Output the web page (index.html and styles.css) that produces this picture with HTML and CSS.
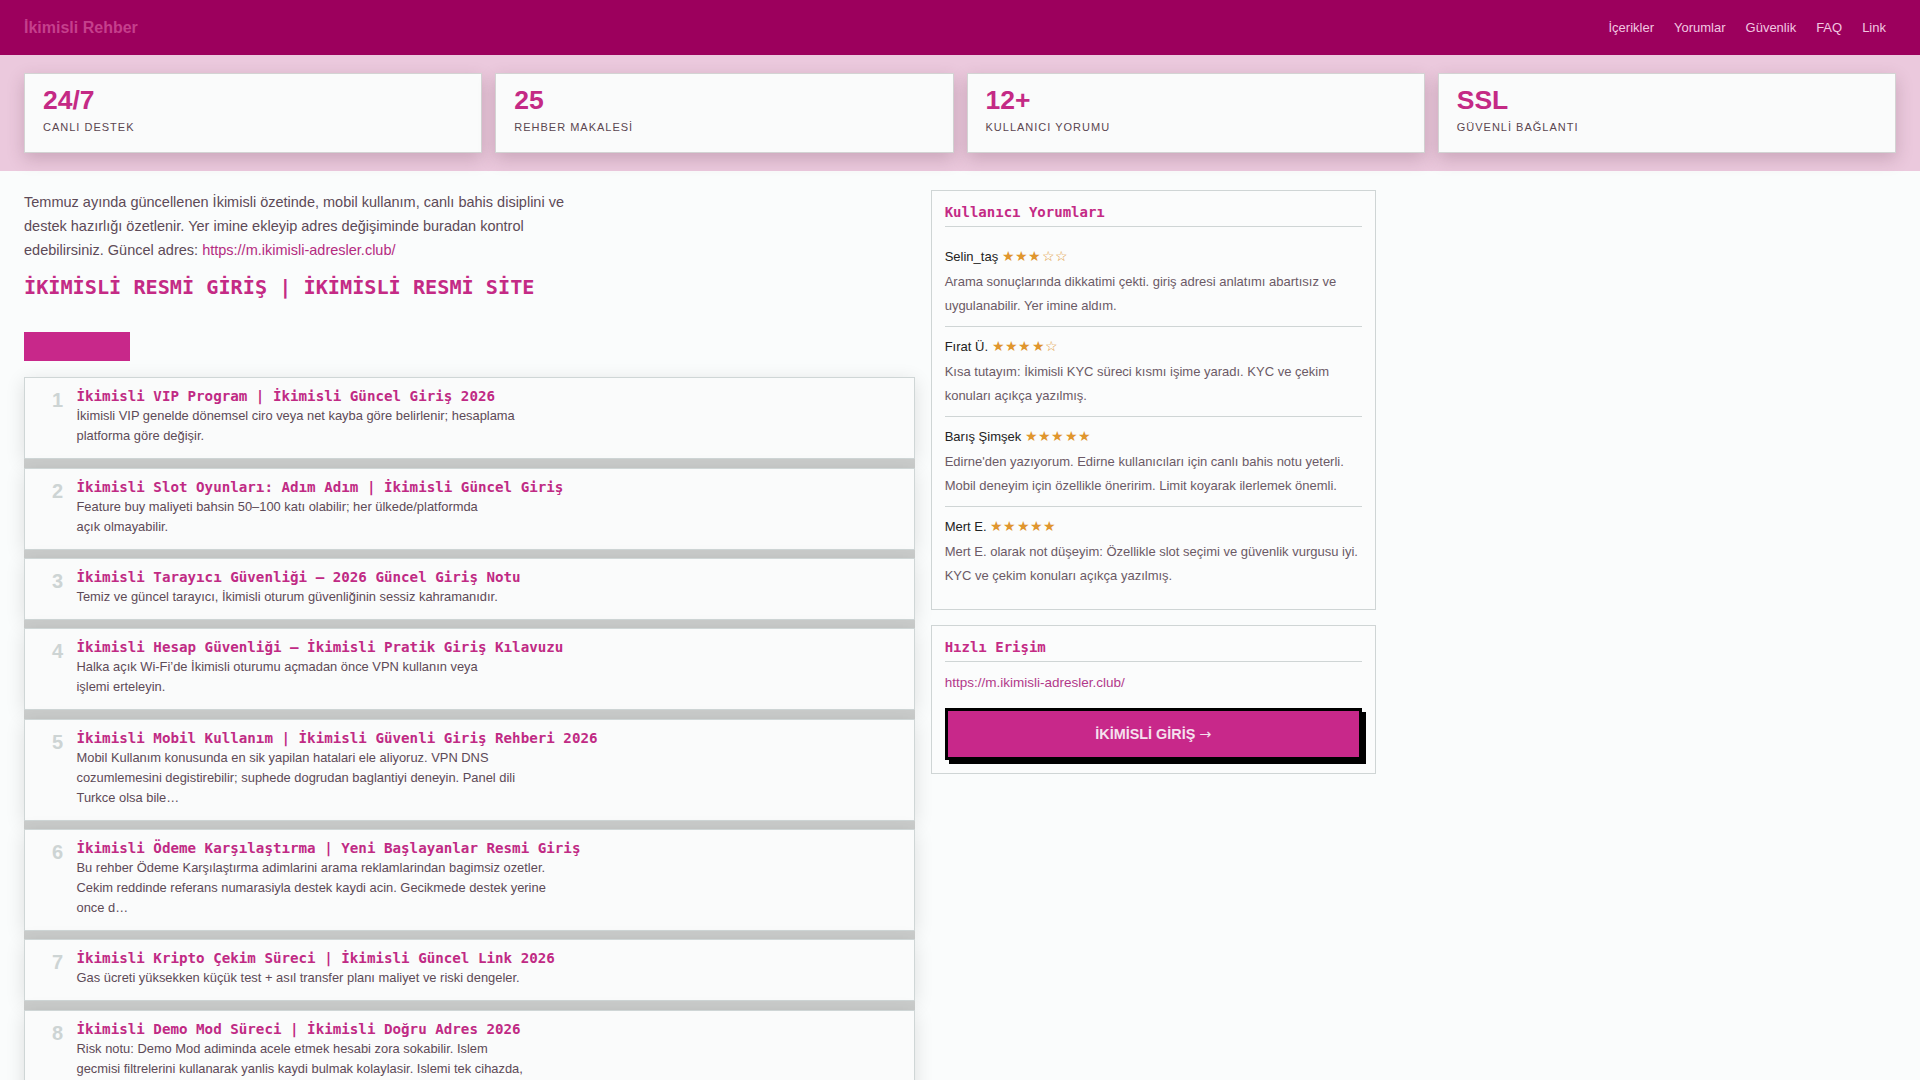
FILE: index.html
```html
<!DOCTYPE html>
<html lang="tr">
<head>
<meta charset="utf-8">
<title>İkimisli Rehber</title>
<link rel="stylesheet" href="styles.css">
</head>
<body>
<header class="topbar">
  <div class="brand">İkimisli Rehber</div>
  <nav class="nav">
    <a href="#">İçerikler</a>
    <a href="#">Yorumlar</a>
    <a href="#">Güvenlik</a>
    <a href="#">FAQ</a>
    <a href="#">Link</a>
  </nav>
</header>

<section class="stats">
  <div class="stat"><div class="stat-num">24/7</div><div class="stat-label">CANLI DESTEK</div></div>
  <div class="stat"><div class="stat-num">25</div><div class="stat-label">REHBER MAKALESİ</div></div>
  <div class="stat"><div class="stat-num">12+</div><div class="stat-label">KULLANICI YORUMU</div></div>
  <div class="stat"><div class="stat-num">SSL</div><div class="stat-label">GÜVENLİ BAĞLANTI</div></div>
</section>

<main class="main">
  <div class="content">
    <p class="intro">Temmuz ayında güncellenen İkimisli özetinde, mobil kullanım, canlı bahis disiplini ve destek hazırlığı özetlenir. Yer imine ekleyip adres değişiminde buradan kontrol edebilirsiniz. Güncel adres: <a href="#">https://m.ikimisli-adresler.club/</a></p>
    <h1 class="page-title">İKİMİSLİ RESMİ GİRİŞ | İKİMİSLİ RESMİ SİTE</h1>
    <div class="cta-bar"></div>

    <ol class="articles">
      <li class="article">
        <span class="num">1</span>
        <div class="article-body">
          <h3>İkimisli VIP Program | İkimisli Güncel Giriş 2026</h3>
          <p>İkimisli VIP genelde dönemsel ciro veya net kayba göre belirlenir; hesaplama<br>platforma göre değişir.</p>
        </div>
      </li>
      <li class="article">
        <span class="num">2</span>
        <div class="article-body">
          <h3>İkimisli Slot Oyunları: Adım Adım | İkimisli Güncel Giriş</h3>
          <p>Feature buy maliyeti bahsin 50–100 katı olabilir; her ülkede/platformda<br>açık olmayabilir.</p>
        </div>
      </li>
      <li class="article">
        <span class="num">3</span>
        <div class="article-body">
          <h3>İkimisli Tarayıcı Güvenliği — 2026 Güncel Giriş Notu</h3>
          <p>Temiz ve güncel tarayıcı, İkimisli oturum güvenliğinin sessiz kahramanıdır.</p>
        </div>
      </li>
      <li class="article">
        <span class="num">4</span>
        <div class="article-body">
          <h3>İkimisli Hesap Güvenliği — İkimisli Pratik Giriş Kılavuzu</h3>
          <p>Halka açık Wi-Fi’de İkimisli oturumu açmadan önce VPN kullanın veya<br>işlemi erteleyin.</p>
        </div>
      </li>
      <li class="article">
        <span class="num">5</span>
        <div class="article-body">
          <h3>İkimisli Mobil Kullanım | İkimisli Güvenli Giriş Rehberi 2026</h3>
          <p>Mobil Kullanım konusunda en sik yapilan hatalari ele aliyoruz. VPN DNS<br>cozumlemesini degistirebilir; suphede dogrudan baglantiyi deneyin. Panel dili<br>Turkce olsa bile…</p>
        </div>
      </li>
      <li class="article">
        <span class="num">6</span>
        <div class="article-body">
          <h3>İkimisli Ödeme Karşılaştırma | Yeni Başlayanlar Resmi Giriş</h3>
          <p>Bu rehber Ödeme Karşılaştırma adimlarini arama reklamlarindan bagimsiz ozetler.<br>Cekim reddinde referans numarasiyla destek kaydi acin. Gecikmede destek yerine<br>once d…</p>
        </div>
      </li>
      <li class="article">
        <span class="num">7</span>
        <div class="article-body">
          <h3>İkimisli Kripto Çekim Süreci | İkimisli Güncel Link 2026</h3>
          <p>Gas ücreti yüksekken küçük test + asıl transfer planı maliyet ve riski dengeler.</p>
        </div>
      </li>
      <li class="article">
        <span class="num">8</span>
        <div class="article-body">
          <h3>İkimisli Demo Mod Süreci | İkimisli Doğru Adres 2026</h3>
          <p>Risk notu: Demo Mod adiminda acele etmek hesabi zora sokabilir. Islem<br>gecmisi filtrelerini kullanarak yanlis kaydi bulmak kolaylasir. Islemi tek cihazda,<br>tek oturumda tamamla…</p>
        </div>
      </li>
    </ol>
  </div>

  <aside class="sidebar">
    <section class="box">
      <h2 class="box-title">Kullanıcı Yorumları</h2>
      <div class="review">
        <div class="review-name">Selin_taş <span class="stars">★★★☆☆</span></div>
        <p>Arama sonuçlarında dikkatimi çekti. giriş adresi anlatımı abartısız ve uygulanabilir. Yer imine aldım.</p>
      </div>
      <div class="review">
        <div class="review-name">Fırat Ü. <span class="stars">★★★★☆</span></div>
        <p>Kısa tutayım: İkimisli KYC süreci kısmı işime yaradı. KYC ve çekim konuları açıkça yazılmış.</p>
      </div>
      <div class="review">
        <div class="review-name">Barış Şimşek <span class="stars">★★★★★</span></div>
        <p>Edirne'den yazıyorum. Edirne kullanıcıları için canlı bahis notu yeterli. Mobil deneyim için özellikle öneririm. Limit koyarak ilerlemek önemli.</p>
      </div>
      <div class="review">
        <div class="review-name">Mert E. <span class="stars">★★★★★</span></div>
        <p>Mert E. olarak not düşeyim: Özellikle slot seçimi ve güvenlik vurgusu iyi. KYC ve çekim konuları açıkça yazılmış.</p>
      </div>
    </section>

    <section class="box">
      <h2 class="box-title">Hızlı Erişim</h2>
      <a class="quick-link" href="#">https://m.ikimisli-adresler.club/</a>
      <a class="cta-btn" href="#">İKİMİSLİ GİRİŞ <span class="arrow">→</span></a>
    </section>
  </aside>
</main>
</body>
</html>
```

FILE: styles.css
```css
* { box-sizing: border-box; }

body {
  margin: 0;
  background: #fafcfc;
  font-family: "Liberation Sans", Arial, sans-serif;
  color: #5d4a57;
}

.topbar {
  height: 55px;
  background: #9c005d;
  display: flex;
  align-items: center;
  justify-content: space-between;
  padding: 0 24px;
}

.brand {
  font-size: 16px;
  font-weight: bold;
  color: #c53f8c;
}

.nav { display: flex; }

.nav a {
  padding: 6px 10px;
  font-size: 13px;
  color: #f2c7e1;
  text-decoration: none;
}

.stats {
  background: #ebc9dd;
  padding: 18px 24px;
  display: grid;
  grid-template-columns: repeat(4, 1fr);
  gap: 13px;
}

.stat {
  background: #fafbfb;
  border: 1px solid #d3d3d3;
  padding: 12px 18px 17px;
  box-shadow: 0 6px 16px rgba(80, 40, 60, 0.22);
}

.stat-num {
  font-size: 26.5px;
  line-height: 1.1;
  font-weight: bold;
  color: #c42a85;
}

.stat-label {
  margin-top: 4px;
  font-size: 11px;
  line-height: 16px;
  letter-spacing: 1px;
  color: #5a4650;
}

.main {
  display: grid;
  grid-template-columns: 2fr 1fr;
  gap: 16px;
  max-width: 1400px;
  padding: 19px 24px 20px;
}

.sidebar { padding-top: 0; }

.intro {
  margin: 0 0 12px;
  max-width: 565px;
  font-size: 14.5px;
  line-height: 24px;
  color: #5d4a57;
}

.intro a {
  color: #b42b80;
  text-decoration: none;
}

.page-title {
  margin: 0 0 32px;
  font-family: "DejaVu Sans Mono", monospace;
  font-size: 20.2px;
  line-height: 26px;
  font-weight: bold;
  color: #c42a85;
}

.cta-bar {
  width: 106px;
  height: 29px;
  background: #c8288a;
  margin-bottom: 16px;
}

.articles {
  list-style: none;
  margin: 0;
  padding: 0;
  display: flex;
  flex-direction: column;
  gap: 8.4px;
}

.article {
  display: flex;
  align-items: flex-start;
  background: #fafbfb;
  border: 1px solid #cfd6d6;
  padding: 8px 16px 12px 27px;
  box-shadow: 0 9px 0 #cacccb, 0 4px 18px rgba(0, 0, 0, 0.12);
}

.num {
  flex: 0 0 24.5px;
  margin-top: 2px;
  font-size: 20px;
  line-height: 24px;
  font-weight: bold;
  color: #cdd4d4;
}

.article-body h3 {
  margin: 0;
  font-family: "DejaVu Sans Mono", monospace;
  font-size: 14.2px;
  line-height: 20px;
  font-weight: bold;
  color: #c02a84;
}

.article-body p {
  margin: 0;
  font-size: 12.9px;
  line-height: 20px;
  color: #5d4a57;
}

.box {
  background: #fbfcfc;
  border: 1px solid #cfd5d5;
  padding: 11px 13px 13px;
  margin-bottom: 15px;
}

.box-title {
  margin: 0 0 10px;
  padding-bottom: 4px;
  border-bottom: 1px solid #cfd5d5;
  font-family: "DejaVu Sans Mono", monospace;
  font-size: 14px;
  line-height: 20px;
  font-weight: bold;
  color: #c42a85;
}

.review {
  padding: 8.5px 0;
  border-bottom: 1px solid #cfd5d5;
}

.review:last-child { border-bottom: 0; }

.review-name {
  font-size: 13px;
  line-height: 22px;
  color: #222;
}

.stars {
  font-size: 13.5px;
  letter-spacing: 0.3px;
  color: #e0962e;
}

.review p {
  margin: 2px 0 0;
  font-size: 13px;
  line-height: 24px;
  color: #6b5a66;
}

.quick-link {
  display: block;
  margin: 9px 0 15px;
  font-size: 13.5px;
  line-height: 21px;
  color: #b2398a;
  text-decoration: none;
}

.cta-btn {
  display: block;
  height: 52px;
  line-height: 46px;
  border: 3px solid #000;
  background: #c8288a;
  box-shadow: 4px 4px 0 #000;
  color: #f5e1ee;
  font-size: 14.4px;
  font-weight: bold;
  text-align: center;
  text-decoration: none;
}

.arrow {
  font-family: "DejaVu Sans", sans-serif;
  font-weight: normal;
}
```
